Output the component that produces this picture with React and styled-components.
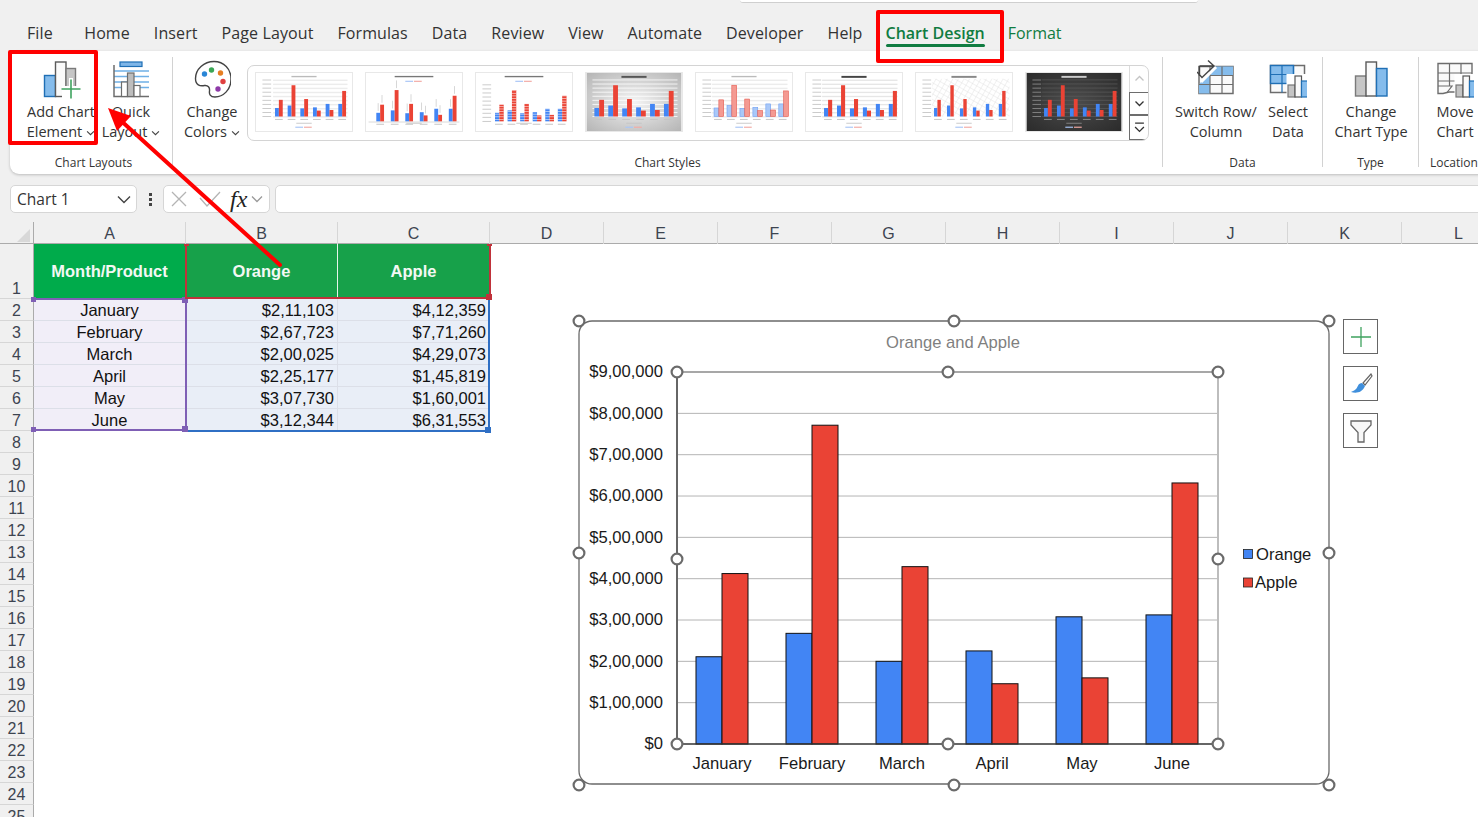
import React from "react";
import styled, { createGlobalStyle } from "styled-components";

const uiFont = `"Open Sans", "Noto Sans", sans-serif`;
const cellFont = `"Liberation Sans", Arial, sans-serif`;

const GlobalStyle = createGlobalStyle`
  html, body {
    margin: 0;
    padding: 0;
    height: 100%;
    overflow: hidden;
    background: #f0f0f0;
  }
  * {
    box-sizing: border-box;
  }
`;

const Page = styled.div`
  position: relative;
  width: 1478px;
  height: 817px;
  overflow: hidden;
  background: #f0f0f0;
  font-family: ${uiFont};
  color: #262626;
`;

const TitleStrip = styled.div`
  height: 3px;
  padding-left: 740px;
`;

const SearchStub = styled.div`
  width: 458px;
  height: 3px;
  background: #fff;
  border-bottom: 1px solid #cfcfcf;
  border-radius: 0 0 6px 6px;
`;

const TabRow = styled.div`
  display: flex;
  gap: 24px;
  height: 48px;
  padding-left: 27px;
`;

const Tab = styled.div`
  position: relative;
  padding-top: 19px;
  font-size: 16px;
  line-height: 22px;
  letter-spacing: ${(p) => (p.$green ? "0" : "0.1px")};
  white-space: nowrap;
  margin-right: ${(p) => (p.$first ? "7.5px" : p.$active ? "-1px" : "0")};
  margin-left: ${(p) => (p.$active ? "-1px" : "0")};
  color: ${(p) => (p.$green ? "#107c41" : "#333")};
  font-weight: ${(p) => (p.$active ? 600 : 400)};
  ${(p) =>
    p.$active &&
    `&::after {
      content: "";
      position: absolute;
      left: 0;
      right: 0;
      bottom: 4px;
      height: 3px;
      border-radius: 2px;
      background: #107c41;
    }`}
`;

const Ribbon = styled.div`
  display: flex;
  width: 1500px;
  height: 123px;
  margin-left: 10px;
  padding: 6px 0 7px;
  background: #fff;
  border-radius: 9px 0 0 9px;
  box-shadow: 0 1px 3px rgba(0, 0, 0, 0.22);
`;

const Group = styled.div`
  flex: none;
  display: flex;
  flex-direction: column;
  width: ${(p) => p.$width}px;
  height: 110px;
  border-right: ${(p) => (p.$last ? "none" : "1px solid #d2d2d2")};
`;

const GroupBody = styled.div`
  display: flex;
  flex: 1;
  padding-left: ${(p) => p.$pad || 0}px;
`;

const GroupLabel = styled.div`
  height: 12px;
  margin-bottom: -2px;
  padding-left: ${(p) => p.$pad || 0}px;
  font-size: 12px;
  line-height: 12px;
  text-align: center;
  color: #333;
`;

const BigButton = styled.div`
  flex: none;
  display: flex;
  flex-direction: column;
  align-items: center;
  width: ${(p) => p.$width}px;
`;

const IconSlot = styled.div`
  height: 39px;
  margin-top: 3px;
  margin-bottom: 3px;
  display: flex;
  justify-content: center;
`;

const ButtonText = styled.div`
  font-size: 14.5px;
  line-height: 20px;
  text-align: center;
  white-space: nowrap;
  color: #333;
`;

const Gallery = styled.div`
  display: flex;
  width: 902px;
  height: 76px;
  margin-top: 8px;
  padding-left: 7px;
  border: 1px solid #d4d4d4;
  border-radius: 7px;
  overflow: hidden;
`;

const ThumbList = styled.div`
  display: flex;
  gap: 12px;
  padding-top: 6px;
`;

const ThumbFrame = styled.div`
  width: 98px;
  height: 60px;
  border: 1px solid #e8e8e8;
  overflow: hidden;
  svg {
    display: block;
    width: 100%;
    height: 100%;
    filter: blur(0.45px);
  }
`;

const Scroller = styled.div`
  display: flex;
  flex-direction: column;
  width: 19px;
  margin-left: 6px;
`;

const ScrollButton = styled.div`
  display: flex;
  align-items: center;
  justify-content: center;
  height: ${(p) => p.$h}px;
  border-left: 1px solid ${(p) => (p.$off ? "#dcdcdc" : "#6d6d6d")};
  border-top: ${(p) => (p.$off ? "none" : "1px solid #6d6d6d")};
  border-bottom: ${(p) => (p.$off ? "none" : "1px solid #6d6d6d")};
`;

const FormulaRow = styled.div`
  display: flex;
  align-items: center;
  height: 28px;
  margin-top: 11px;
  padding-left: 10px;
`;

const NameBox = styled.div`
  display: flex;
  align-items: center;
  justify-content: space-between;
  width: 127px;
  height: 28px;
  padding: 0 5px 0 6px;
  background: #fff;
  border: 1px solid #d6d6d6;
  border-radius: 5px;
  font-size: 15.5px;
  color: #333;
`;

const GripDots = styled.div`
  display: flex;
  flex-direction: column;
  gap: 2px;
  width: 26px;
  align-items: center;
  i {
    display: block;
    width: 3px;
    height: 3px;
    background: #444;
  }
`;

const FormulaTools = styled.div`
  display: flex;
  align-items: center;
  width: 107px;
  height: 28px;
  padding-left: 7px;
  background: #fff;
  border: 1px solid #d6d6d6;
  border-radius: 5px;
`;

const ToolGlyph = styled.svg`
  flex: none;
  margin-left: ${(p) => p.$gap || 0}px;
`;

const FxMark = styled.span`
  width: 20px;
  margin-left: 9px;
  font-family: "Liberation Serif", serif;
  font-style: italic;
  font-size: 24px;
  line-height: 24px;
  color: #222;
`;

const FormulaInput = styled.div`
  flex: 1;
  height: 28px;
  margin-left: 5px;
  margin-right: -12px;
  background: #fff;
  border: 1px solid #d6d6d6;
  border-radius: 5px;
`;

const sheetColumns = "34px 152px 152px 152px repeat(10, 114px)";

const HeaderRow = styled.div`
  display: grid;
  grid-template-columns: ${sheetColumns};
  height: 22px;
  margin-top: 9px;
  border-bottom: 1px solid #ababab;
`;

const CornerCell = styled.div`
  position: relative;
  border-right: 1px solid #ababab;
  &::after {
    content: "";
    position: absolute;
    right: 3px;
    bottom: 3px;
    border-style: solid;
    border-width: 0 0 13px 13px;
    border-color: transparent transparent #d8d8d8 transparent;
  }
`;

const ColumnHead = styled.div`
  border-right: 1px solid #d6d6d6;
  font-family: ${cellFont};
  font-size: 16px;
  line-height: 23px;
  text-align: center;
  color: #3d4450;
`;

const Sheet = styled.div`
  position: relative;
  height: 573px;
  background: #fff;
  overflow: hidden;
`;

const SheetRow = styled.div`
  display: grid;
  grid-template-columns: ${sheetColumns};
  grid-template-rows: minmax(0, 1fr);
  height: ${(p) => p.$h || 22}px;
`;

const RowHead = styled.div`
  display: flex;
  align-items: flex-end;
  justify-content: center;
  background: #f0f0f0;
  border-right: 1px solid #ababab;
  border-bottom: 1px solid #d6d6d6;
  font-family: ${cellFont};
  font-size: 16px;
  line-height: 19px;
  color: #3d4450;
`;

const HeadCell = styled.div`
  display: flex;
  align-items: center;
  justify-content: center;
  padding-bottom: 1px;
  background: ${(p) => (p.$bright ? "#00ab4b" : "#17a14a")};
  border-right: 1px solid #e6f4ea;
  font-family: ${cellFont};
  font-size: 16.5px;
  font-weight: 700;
  color: #f3f8f4;
`;

const DataCell = styled.div`
  padding: 0 ${(p) => (p.$month ? "0" : "3px")};
  background: ${(p) => (p.$month ? "#f1eef8" : "#e9eef7")};
  border-right: 1px solid #dcdfe8;
  border-bottom: 1px solid #dcdfe8;
  font-family: ${cellFont};
  font-size: 16.5px;
  line-height: 22px;
  text-align: ${(p) => (p.$month ? "center" : "right")};
  color: #111;
`;

const RangeBox = styled.div`
  position: absolute;
  left: ${(p) => p.$left}px;
  top: ${(p) => p.$top}px;
  width: ${(p) => p.$width}px;
  height: ${(p) => p.$height}px;
  border-style: solid;
  border-color: ${(p) => p.$color};
  border-width: ${(p) => p.$edges};
`;

const RangeHandle = styled.i`
  position: absolute;
  display: block;
  width: ${(p) => p.$size || 5}px;
  height: ${(p) => p.$size || 5}px;
  background: ${(p) => p.$color};
  ${(p) => (p.$v === "t" ? "top: -3px;" : "bottom: -3px;")}
  ${(p) => (p.$h === "l" ? "left: -3px;" : "right: -3px;")}
`;

const ChartHolder = styled.div`
  position: absolute;
  left: 570px;
  top: 66px;
  width: 820px;
  height: 490px;
  svg text {
    font-family: ${cellFont};
  }
`;

const ChartTools = styled.div`
  position: absolute;
  left: 773px;
  top: 9px;
  display: flex;
  flex-direction: column;
  gap: 12px;
`;

const ChartTool = styled.div`
  display: flex;
  align-items: center;
  justify-content: center;
  width: 35px;
  height: 35px;
  background: #fff;
  border: 1px solid #666;
`;

const CalloutBox = styled.div`
  position: absolute;
  left: ${(p) => p.$left}px;
  top: ${(p) => p.$top}px;
  width: ${(p) => p.$width}px;
  height: ${(p) => p.$height}px;
  border: 4px solid #ff0000;
  border-radius: 2px;
  pointer-events: none;
`;

const ArrowLayer = styled.svg`
  position: absolute;
  left: 0;
  top: 0;
  pointer-events: none;
`;

const CaretGlyph = styled.svg`
  margin-left: 4px;
  vertical-align: 1px;
`;

const Caret = () => (
  <CaretGlyph width="9" height="6" viewBox="0 0 10 7">
    <path d="M1 1.5 L5 5.5 L9 1.5" fill="none" stroke="#444" strokeWidth="1.3" />
  </CaretGlyph>
);

const AddChartIcon = () => (
  <svg width="40" height="39" viewBox="41 60 40 39">
    <rect x="44.5" y="75.5" width="11" height="21" fill="#85bcec" stroke="#1f6fb5" strokeWidth="1.4" />
    <rect x="55.5" y="62" width="10.5" height="34.5" fill="#fafafa" stroke="#5a5a5a" strokeWidth="1.4" />
    <rect x="66" y="68.5" width="9.5" height="28" fill="#c6c6c6" stroke="#7a7a7a" strokeWidth="1.4" />
    <rect x="62" y="86" width="18" height="12" fill="#fff" />
    <rect x="69" y="78" width="4" height="9" fill="#fff" />
    <path d="M71 79.5 V98.5 M61.5 89 H80.5" stroke="#3fa35f" strokeWidth="1.6" />
  </svg>
);

const QuickLayoutIcon = () => (
  <svg width="38" height="39" viewBox="112 60 38 39">
    <rect x="120" y="62" width="22" height="4.5" fill="#7fb6e8" stroke="#1f6fb5" strokeWidth="1.2" />
    <path d="M114 71 H149 M114 76.5 H149 M114 82 H149 M114 87.5 H149" stroke="#6fb0e6" strokeWidth="1.4" />
    <path d="M114 65 V96.5 H149" fill="none" stroke="#6d6d6d" strokeWidth="1.5" />
    <rect x="121.5" y="82" width="6" height="14.5" fill="#fff" stroke="#6d6d6d" strokeWidth="1.2" />
    <rect x="127.5" y="73" width="6.5" height="23.5" fill="#bdbdbd" stroke="#6d6d6d" strokeWidth="1.2" />
    <rect x="134" y="85.5" width="6" height="11" fill="#fff" stroke="#6d6d6d" strokeWidth="1.2" />
  </svg>
);

const PaletteIcon = () => (
  <svg width="38" height="39" viewBox="193 60 38 39">
    <path
      d="M214 61.5 C224 61.5 231 69 231 79 C231 90 223 97 215 97 C210 97 209 94 209.5 91 C210 87.5 208 85 204.5 85.5 C200 86.5 195.5 85 195.5 78.5 C195.5 69 204 61.5 214 61.5 Z"
      fill="#fff"
      stroke="#444"
      strokeWidth="1.4"
    />
    <circle cx="204.5" cy="74" r="2.7" fill="#2a86d6" />
    <circle cx="211.5" cy="70" r="2.7" fill="#3aa655" />
    <circle cx="220.5" cy="73" r="2.7" fill="#e67e22" />
    <circle cx="223" cy="81.5" r="2.7" fill="#e04040" />
    <circle cx="218" cy="89" r="2.7" fill="#8e3aa8" />
  </svg>
);

const MiniBars = ({ x, y }) => (
  <g transform={`translate(${x} ${y})`}>
    <rect x="-1.5" y="-2" width="23" height="25" fill="#fff" />
    <rect x="0" y="9" width="7" height="12" fill="#c4c4c4" stroke="#777" strokeWidth="1.2" />
    <rect x="7" y="0" width="6.5" height="21" fill="#fafafa" stroke="#555" strokeWidth="1.2" />
    <rect x="13.5" y="5" width="6.5" height="16" fill="#85bcec" stroke="#1f6fb5" strokeWidth="1.2" />
  </g>
);

const SwitchIcon = () => (
  <svg width="38" height="39" viewBox="1197 59 38 39">
    <rect x="1199" y="65.5" width="34" height="27" fill="#fafafa" stroke="#6d6d6d" strokeWidth="1.5" />
    <path d="M1199 92.5 V83.5 H1210 V92.5 Z M1199 83.5 L1214 65.5 H1233 V74.5 H1210 V83.5 Z" fill="#85bcec" />
    <path d="M1210 74.5 H1233 M1199 83.5 H1233 M1210 65.5 V92.5 M1222 65.5 V92.5" stroke="#6d6d6d" strokeWidth="1.2" />
    <path d="M1216 66 L1201 81" stroke="#fff" strokeWidth="3" />
    <path
      d="M1199.5 65 H1213 M1208 59.5 L1214 65 L1202 76.5 L1197 71 M1199.5 65 V75"
      fill="none"
      stroke="#444"
      strokeWidth="1.4"
    />
  </svg>
);

const SelectDataIcon = () => (
  <svg width="38" height="39" viewBox="1269 60 38 39">
    <rect x="1270.5" y="65.5" width="34" height="27" fill="#fafafa" stroke="#6d6d6d" strokeWidth="1.5" />
    <rect x="1270.5" y="65.5" width="23" height="18" fill="#85bcec" stroke="#1f6fb5" strokeWidth="1.4" />
    <path d="M1282 65.5 V92.5 M1270.5 74.5 H1293 M1293.5 65.5 V75 M1270.5 83.5 H1282" stroke="#1f6fb5" strokeWidth="1.2" />
    <MiniBars x={1288} y={76} />
  </svg>
);

const ChartTypeIcon = () => (
  <svg width="38" height="39" viewBox="1352 60 38 39">
    <rect x="1355.5" y="76" width="11" height="20" fill="#c6c6c6" stroke="#7a7a7a" strokeWidth="1.4" />
    <rect x="1366" y="62" width="10.5" height="34" fill="#fafafa" stroke="#5a5a5a" strokeWidth="1.4" />
    <rect x="1376.5" y="68.5" width="10.5" height="27.5" fill="#85bcec" stroke="#1f6fb5" strokeWidth="1.4" />
  </svg>
);

const MoveChartIcon = () => (
  <svg width="38" height="39" viewBox="1436 60 38 39">
    <path d="M1438 63.5 H1472 V92 H1449 L1443 93.5 H1438 Z" fill="#fafafa" stroke="#6d6d6d" strokeWidth="1.4" />
    <path d="M1449.5 63.5 V86 M1461 63.5 V86 M1438 73 H1472 M1438 81 H1472 M1438 86 H1452 L1447 92.5" fill="none" stroke="#6d6d6d" strokeWidth="1.2" />
    <MiniBars x={1456} y={76} />
  </svg>
);

const thumbData = [
  [21, 41],
  [27, 77],
  [20, 43],
  [22.5, 14.6],
  [31, 16],
  [31, 63],
];

const thumbStyles = [
  { base: 45, left: 19, step: 13.1, w: 4, grid: "#ececec", gridW: 1.5, axis: true, title: "#bbb" },
  { base: 50, left: 10, step: 15, w: 4, labels: true, topLegend: true, baseline: true, title: "#777", wide: true },
  { base: 50, left: 19, step: 13, w: 4.5, stripes: true, axis: true, topLegend: true, title: "#777", wide: true },
  { base: 45, left: 8, step: 14.4, w: 5, bg: "url(#sheen)", grid: "#fff", gridW: 0.8, title: "#555", bold: true },
  { base: 45, left: 18, step: 13.4, w: 5, pale: true, grid: "#ececec", gridW: 1.5, axis: true, title: "#bbb" },
  { base: 45, left: 18, step: 13.4, w: 4.2, grid: "#e6e6e6", gridW: 1.4, axis: true, title: "#444", bold: true },
  { base: 45, left: 18, step: 13.4, w: 3.5, texture: true, axis: true, title: "#888", bold: true },
  { base: 45, left: 18, step: 13.4, w: 4, bg: "url(#dark)", grid: "#5c5c5c", gridW: 0.7, axis: true, title: "#ccc", bold: true, dark: true },
];

const ChartThumb = ({ look, index }) => {
  const scale = 0.42;
  const gridY = [];
  for (let i = 0; i < 10; i++) gridY.push(look.base - i * 4.2);
  const blue = look.pale ? "#a9c8f8" : "#4285f4";
  const red = look.pale ? "#f49a92" : "#ea4335";
  const soft = look.dark ? "#8a8a8a" : "#c4c4c4";
  const titleW = look.wide ? 40 : 26;
  return (
    <svg viewBox="0 0 98 60">
      <defs>
        <radialGradient id="sheen" cx="50%" cy="50%" r="70%">
          <stop offset="0%" stopColor="#f4f4f4" />
          <stop offset="100%" stopColor="#b5b5b5" />
        </radialGradient>
        <radialGradient id="dark" cx="50%" cy="50%" r="70%">
          <stop offset="0%" stopColor="#4d4d4d" />
          <stop offset="100%" stopColor="#2b2b2b" />
        </radialGradient>
        <pattern id={`hatch${index}`} width="5" height="5" patternUnits="userSpaceOnUse" patternTransform="rotate(30)">
          <path d="M0 0 H5 M0 0 V5" stroke="#dcdcdc" strokeWidth="0.8" />
        </pattern>
      </defs>
      <rect width="98" height="60" fill={look.bg || "#fff"} />
      {look.texture && <rect x="16" y="6" width="80" height="39" fill={`url(#hatch${index})`} />}
      <rect x={49 - titleW / 2} y={3} width={titleW} height={look.bold ? 2 : 1.4} fill={look.title} />
      {look.topLegend && (
        <g>
          <rect x={40} y={8} width={8} height={1.2} fill="#a9c6f6" />
          <rect x={49} y={8} width={8} height={1.2} fill="#f2aaa4" />
        </g>
      )}
      {look.grid &&
        gridY.map((y) => <rect key={y} x={look.left - 2} y={y - 0.4} width={96 - look.left} height={look.gridW} fill={look.grid} />)}
      {look.axis && gridY.map((y) => <rect key={`a${y}`} x={6} y={y - 0.4} width={9} height={0.9} fill={soft} />)}
      {look.baseline && <rect x={2} y={look.base} width={94} height={1.4} fill="#e4e4e4" />}
      {thumbData.map(([a, b], i) => {
        const x = look.left + i * look.step;
        const ha = a * scale;
        const hb = b * scale;
        return (
          <g key={i}>
            <rect x={x} y={look.base - ha} width={look.w} height={ha} fill={blue} stroke={look.pale ? "#6b9df2" : "none"} strokeWidth="0.6" />
            <rect x={x + look.w} y={look.base - hb} width={look.w} height={hb} fill={red} stroke={look.pale ? "#e4584c" : "none"} strokeWidth="0.6" />
            {look.stripes && (
              <g fill="#fff" opacity="0.7">
                {Array.from({ length: 12 }).map((_, k) => (
                  <rect key={k} x={x} y={look.base - 2.4 - k * 2.7} width={look.w * 2} height={0.8} />
                ))}
              </g>
            )}
            {look.labels && <rect x={x + 1.5} y={look.base - ha - 10} width={0.8} height={8} fill="#ccc" />}
            {look.labels && <rect x={x + look.w + 1.5} y={look.base - hb - 10} width={0.8} height={8} fill="#ccc" />}
            <rect x={x} y={look.base + 2.5} width={8} height={1} fill={soft} />
          </g>
        );
      })}
      {!look.topLegend && (
        <g>
          <rect x={40} y={55.5} width={8} height={1.2} fill="#a9c6f6" />
          <rect x={49} y={55.5} width={8} height={1.2} fill="#f2aaa4" />
        </g>
      )}
      <rect x={41} y={51.5} width={16} height={0.9} fill={soft} />
    </svg>
  );
};

const tabs = ["File", "Home", "Insert", "Page Layout", "Formulas", "Data", "Review", "View", "Automate", "Developer", "Help"];
const columnLetters = ["D", "E", "F", "G", "H", "I", "J", "K", "L", "M"];
const rows = [
  ["January", "$2,11,103", "$4,12,359"],
  ["February", "$2,67,723", "$7,71,260"],
  ["March", "$2,00,025", "$4,29,073"],
  ["April", "$2,25,177", "$1,45,819"],
  ["May", "$3,07,730", "$1,60,001"],
  ["June", "$3,12,344", "$6,31,553"],
];
const chartData = [
  ["January", 211103, 412359],
  ["February", 267723, 771260],
  ["March", 200025, 429073],
  ["April", 225177, 145819],
  ["May", 307730, 160001],
  ["June", 312344, 631553],
];
const axisLabels = ["$0", "$1,00,000", "$2,00,000", "$3,00,000", "$4,00,000", "$5,00,000", "$6,00,000", "$7,00,000", "$8,00,000", "$9,00,000"];

const frameHandles = [
  [579, 321], [954, 321], [1329, 321], [579, 553], [1329, 553], [579, 785], [954, 785], [1329, 785],
];
const plotHandles = [
  [677, 372], [948, 372], [1218, 372], [677, 559], [1218, 559], [677, 744], [948, 744], [1218, 744],
];

const ChartDrawing = () => {
  const toY = (v) => 744 - (v / 900000) * 372;
  return (
    <svg width="780" height="490" viewBox="570 310 780 490">
      <rect x="579" y="321" width="750" height="463" rx="13" fill="#fff" stroke="#6a6a6a" strokeWidth="1.3" />
      <text x="953" y="348" textAnchor="middle" fontSize="16.6" fill="#7f7f7f">
        Orange and Apple
      </text>
      {axisLabels.map((label, i) => (
        <g key={label}>
          {i > 0 && i < 9 && <line x1="677" x2="1218" y1={744 - i * 41.33} y2={744 - i * 41.33} stroke="#b4b4b4" />}
          <text x="663" y={744 - i * 41.33 + 5.4} textAnchor="end" fontSize="16.6" fill="#1a1a1a">
            {label}
          </text>
        </g>
      ))}
      <line x1="677" x2="1218" y1="372" y2="372" stroke="#8a8a8a" strokeWidth="1.5" />
      <line x1="1218" x2="1218" y1="372" y2="744" stroke="#bdbdbd" strokeWidth="2" />
      <line x1="677" x2="677" y1="372" y2="744" stroke="#666" strokeWidth="2" />
      {chartData.map(([month, a, b], i) => {
        const x = 696 + i * 90;
        return (
          <g key={month}>
            <rect x={x} y={toY(a)} width="26" height={744 - toY(a)} fill="#4285f4" stroke="#111" />
            <rect x={x + 26} y={toY(b)} width="26" height={744 - toY(b)} fill="#ea4335" stroke="#111" />
            <text x={x + 26} y="769" textAnchor="middle" fontSize="16.6" fill="#1a1a1a">
              {month}
            </text>
          </g>
        );
      })}
      <line x1="677" x2="1218" y1="744" y2="744" stroke="#333" strokeWidth="1.3" />
      <rect x="1243.5" y="549.5" width="9" height="9" fill="#4285f4" stroke="#222" strokeWidth="0.8" />
      <text x="1256" y="560" fontSize="16.6" fill="#1a1a1a">
        Orange
      </text>
      <rect x="1243.5" y="578" width="9" height="9" fill="#ea4335" stroke="#222" strokeWidth="0.8" />
      <text x="1255" y="588" fontSize="16.6" fill="#1a1a1a">
        Apple
      </text>
      {frameHandles.concat(plotHandles).map(([x, y]) => (
        <circle key={`${x}-${y}`} cx={x} cy={y} r="5.4" fill="#fff" stroke="#6b6b6b" strokeWidth="2.2" />
      ))}
    </svg>
  );
};

const Corners = ({ color, list }) =>
  list.map(([v, h, size]) => <RangeHandle key={v + h} $v={v} $h={h} $size={size} $color={color} />);

const App = () => (
  <Page>
    <GlobalStyle />
    <TitleStrip>
      <SearchStub />
    </TitleStrip>
    <TabRow>
      {tabs.map((t, i) => (
        <Tab key={t} $first={i === 0}>
          {t}
        </Tab>
      ))}
      <Tab $green $active>
        Chart Design
      </Tab>
      <Tab $green>Format</Tab>
    </TabRow>

    <Ribbon>
      <Group $width={163}>
        <GroupBody $pad={16}>
          <BigButton $width={70}>
            <IconSlot>
              <AddChartIcon />
            </IconSlot>
            <ButtonText>
              Add Chart
              <br />
              Element
              <Caret />
            </ButtonText>
          </BigButton>
          <BigButton $width={70}>
            <IconSlot>
              <QuickLayoutIcon />
            </IconSlot>
            <ButtonText>
              Quick
              <br />
              Layout
              <Caret />
            </ButtonText>
          </BigButton>
        </GroupBody>
        <GroupLabel $pad={5}>Chart Layouts</GroupLabel>
      </Group>
      <Group $width={990}>
        <GroupBody $pad={4}>
          <BigButton $width={70}>
            <IconSlot>
              <PaletteIcon />
            </IconSlot>
            <ButtonText>
              Change
              <br />
              Colors
              <Caret />
            </ButtonText>
          </BigButton>
          <Gallery>
            <ThumbList>
              {thumbStyles.map((look, i) => (
                <ThumbFrame key={i}>
                  <ChartThumb look={look} index={i} />
                </ThumbFrame>
              ))}
            </ThumbList>
            <Scroller>
              <ScrollButton $h={26} $off>
                <svg width="11" height="7" viewBox="0 0 10 7">
                  <path d="M1 5.5 L5 1.5 L9 5.5" fill="none" stroke="#c4c4c4" strokeWidth="1.3" />
                </svg>
              </ScrollButton>
              <ScrollButton $h={24}>
                <svg width="11" height="7" viewBox="0 0 10 7">
                  <path d="M1 1.5 L5 5.5 L9 1.5" fill="none" stroke="#333" strokeWidth="1.3" />
                </svg>
              </ScrollButton>
              <ScrollButton $h={25}>
                <svg width="11" height="11" viewBox="0 0 10 10">
                  <path d="M1 1 H9 M1 4.5 L5 8.5 L9 4.5" fill="none" stroke="#333" strokeWidth="1.2" />
                </svg>
              </ScrollButton>
            </Scroller>
          </Gallery>
        </GroupBody>
        <GroupLabel>Chart Styles</GroupLabel>
      </Group>
      <Group $width={160}>
        <GroupBody $pad={9}>
          <BigButton $width={88}>
            <IconSlot>
              <SwitchIcon />
            </IconSlot>
            <ButtonText>
              Switch Row/
              <br />
              Column
            </ButtonText>
          </BigButton>
          <BigButton $width={56}>
            <IconSlot>
              <SelectDataIcon />
            </IconSlot>
            <ButtonText>
              Select
              <br />
              Data
            </ButtonText>
          </BigButton>
        </GroupBody>
        <GroupLabel>Data</GroupLabel>
      </Group>
      <Group $width={96}>
        <GroupBody>
          <BigButton $width={96}>
            <IconSlot>
              <ChartTypeIcon />
            </IconSlot>
            <ButtonText>
              Change
              <br />
              Chart Type
            </ButtonText>
          </BigButton>
        </GroupBody>
        <GroupLabel>Type</GroupLabel>
      </Group>
      <Group $width={70} $last>
        <GroupBody>
          <BigButton $width={72}>
            <IconSlot>
              <MoveChartIcon />
            </IconSlot>
            <ButtonText>
              Move
              <br />
              Chart
            </ButtonText>
          </BigButton>
        </GroupBody>
        <GroupLabel>Location</GroupLabel>
      </Group>
    </Ribbon>

    <FormulaRow>
      <NameBox>
        Chart 1
        <svg width="14" height="9" viewBox="0 0 14 9">
          <path d="M1 1.5 L7 7.5 L13 1.5" fill="none" stroke="#444" strokeWidth="1.4" />
        </svg>
      </NameBox>
      <GripDots>
        <i />
        <i />
        <i />
      </GripDots>
      <FormulaTools>
        <svg width="16" height="16" viewBox="0 0 16 16">
          <path d="M1 1 L15 15 M15 1 L1 15" stroke="#b4b4b4" strokeWidth="1.3" />
        </svg>
        <ToolGlyph $gap={12} width="22" height="16" viewBox="0 0 22 16">
          <path d="M1 7 L8 15 L21 1" fill="none" stroke="#b4b4b4" strokeWidth="1.3" />
        </ToolGlyph>
        <FxMark>fx</FxMark>
        <ToolGlyph $gap={1} width="12" height="8" viewBox="0 0 12 8">
          <path d="M1 1.5 L6 6.5 L11 1.5" fill="none" stroke="#9a9a9a" strokeWidth="1.3" />
        </ToolGlyph>
      </FormulaTools>
      <FormulaInput />
    </FormulaRow>

    <HeaderRow>
      <CornerCell />
      <ColumnHead>A</ColumnHead>
      <ColumnHead>B</ColumnHead>
      <ColumnHead>C</ColumnHead>
      {columnLetters.map((c) => (
        <ColumnHead key={c}>{c}</ColumnHead>
      ))}
    </HeaderRow>

    <Sheet>
      <SheetRow $h={55}>
        <RowHead>1</RowHead>
        <HeadCell $bright>Month/Product</HeadCell>
        <HeadCell>Orange</HeadCell>
        <HeadCell>Apple</HeadCell>
      </SheetRow>
      {rows.map(([month, a, b], i) => (
        <SheetRow key={month}>
          <RowHead>{i + 2}</RowHead>
          <DataCell $month>{month}</DataCell>
          <DataCell>{a}</DataCell>
          <DataCell>{b}</DataCell>
        </SheetRow>
      ))}
      {Array.from({ length: 18 }).map((_, i) => (
        <SheetRow key={i}>
          <RowHead>{i + 8}</RowHead>
        </SheetRow>
      ))}

      <RangeBox $left={186} $top={54} $width={304} $height={134} $color="#2f6fc4" $edges="0 2px 2px 0">
        <Corners color="#2f6fc4" list={[["b", "r", 6]]} />
      </RangeBox>
      <RangeBox $left={34} $top={54} $width={153} $height={133} $color="#7f5fb5" $edges="2px 2px 2px 0">
        <Corners color="#7f5fb5" list={[["t", "l"], ["t", "r", 6], ["b", "l"], ["b", "r", 6]]} />
      </RangeBox>
      <RangeBox $left={185} $top={0} $width={306} $height={55} $color="#c0323a" $edges="0 2px 2px 2px">
        <Corners color="#c0323a" list={[["t", "l"], ["t", "r"], ["b", "r", 6]]} />
      </RangeBox>

      <ChartHolder>
        <ChartDrawing />
        <ChartTools>
          <ChartTool>
            <svg width="22" height="22" viewBox="0 0 22 22">
              <path d="M11 1 V21 M1 11 H21" stroke="#3fa35f" strokeWidth="1.3" />
            </svg>
          </ChartTool>
          <ChartTool>
            <svg width="24" height="24" viewBox="0 0 24 24">
              <path d="M22 2 L14 11 L16 13 L23 4 Z" fill="#fff" stroke="#666" strokeWidth="1.2" />
              <path d="M13 11 C9 11 9 15 7 17 C5 19 3 19 2 20 C7 21.5 13 21 16 14 Z" fill="#3f8fdc" />
            </svg>
          </ChartTool>
          <ChartTool>
            <svg width="24" height="24" viewBox="0 0 24 24">
              <path d="M2 2 H22 V6 L15 13.5 V23 H9 V13.5 L2 6 Z" fill="#f7f7f7" stroke="#666" strokeWidth="1.3" />
            </svg>
          </ChartTool>
        </ChartTools>
      </ChartHolder>
    </Sheet>

    <CalloutBox $left={8} $top={50} $width={90} $height={95} />
    <CalloutBox $left={876} $top={10} $width={128} $height={53} />
    <ArrowLayer width="1478" height="817" viewBox="0 0 1478 817">
      <line x1="280" y1="265" x2="118" y2="118" stroke="#ff0000" strokeWidth="4" strokeLinecap="round" />
      <path d="M108 108 L131 116 L117 131 Z" fill="#ff0000" />
    </ArrowLayer>
  </Page>
);

export default App;
